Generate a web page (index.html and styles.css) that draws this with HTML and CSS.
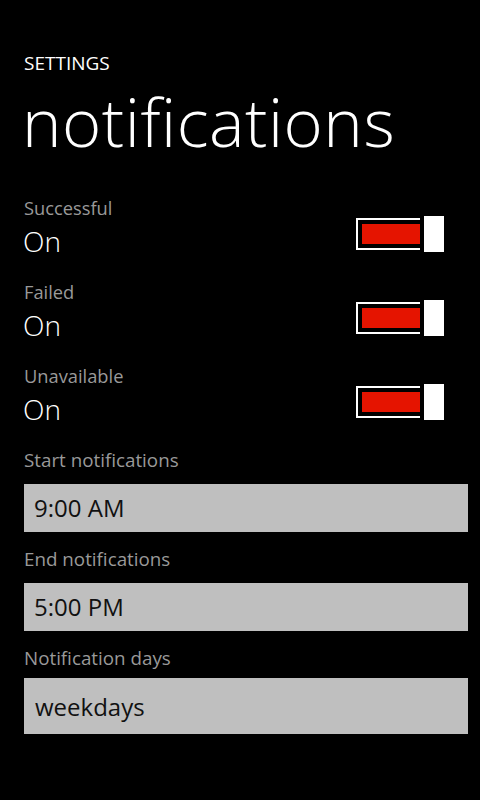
FILE: index.html
```html
<!DOCTYPE html>
<html>
<head>
<meta charset="utf-8">
<link rel="stylesheet" href="styles.css">
</head>
<body>
<div class="page">
  <div class="app-title">SETTINGS</div>
  <div class="page-title">notifications</div>

  <div class="toggles">
    <div class="toggle-row">
      <div class="toggle-text">
        <div class="label">Successful</div>
        <div class="value">On</div>
      </div>
      <div class="switch">
        <div class="track"><div class="fill"></div></div>
        <div class="thumb"></div>
      </div>
    </div>
    <div class="toggle-row">
      <div class="toggle-text">
        <div class="label">Failed</div>
        <div class="value">On</div>
      </div>
      <div class="switch">
        <div class="track"><div class="fill"></div></div>
        <div class="thumb"></div>
      </div>
    </div>
    <div class="toggle-row">
      <div class="toggle-text">
        <div class="label">Unavailable</div>
        <div class="value">On</div>
      </div>
      <div class="switch">
        <div class="track"><div class="fill"></div></div>
        <div class="thumb"></div>
      </div>
    </div>
  </div>

  <div class="field">
    <div class="label">Start notifications</div>
    <div class="box">9:00 AM</div>
  </div>
  <div class="field">
    <div class="label">End notifications</div>
    <div class="box">5:00 PM</div>
  </div>
  <div class="field picker">
    <div class="label">Notification days</div>
    <div class="box">weekdays</div>
  </div>
</div>
</body>
</html>
```

FILE: styles.css
```css
html, body {
  margin: 0;
  padding: 0;
  background: #000;
}
body {
  font-family: "Open Sans", "Noto Sans", sans-serif;
  color: #fff;
}
.page {
  width: 480px;
  height: 800px;
  box-sizing: border-box;
  padding: 51px 12px 0 24px;
  overflow: hidden;
}
.app-title {
  font-size: 19px;
  line-height: 24px;
  font-weight: 400;
}
.page-title {
  margin-top: 6px;
  margin-left: -2px;
  font-size: 67px;
  line-height: 80px;
  font-weight: 300;
  letter-spacing: 0.5px;
  white-space: nowrap;
}
.toggles {
  margin-top: 35px;
  display: flex;
  flex-direction: column;
  gap: 18px;
}
.toggle-row {
  display: flex;
  justify-content: space-between;
  align-items: flex-end;
}
.label {
  font-size: 18.3px;
  line-height: 24px;
  color: #999;
}
.value {
  font-size: 28px;
  line-height: 42px;
  font-weight: 300;
  margin-left: -1px;
}
.switch {
  display: flex;
  align-items: center;
  gap: 4px;
  margin: 0 24px 10px 0;
}
.track {
  border: 2px solid #fff;
  border-right: 0;
  padding: 4px 0 4px 4px;
  width: 58px;
  height: 20px;
}
.fill {
  width: 100%;
  height: 100%;
  background: #e51400;
}
.thumb {
  width: 20px;
  height: 36px;
  background: #fff;
}
.field {
  margin-top: 15px;
  display: flex;
  flex-direction: column;
  gap: 12px;
}
.field .label {
  font-size: 18.8px;
}
.toggles + .field {
  margin-top: 18px;
}
.box {
  height: 48px;
  line-height: 48px;
  background: #bfbfbf;
  color: #111;
  font-size: 24px;
  padding-left: 10px;
}
.picker {
  gap: 8px;
}
.picker .box {
  height: 56px;
  line-height: 58px;
  padding-left: 11px;
}
```
